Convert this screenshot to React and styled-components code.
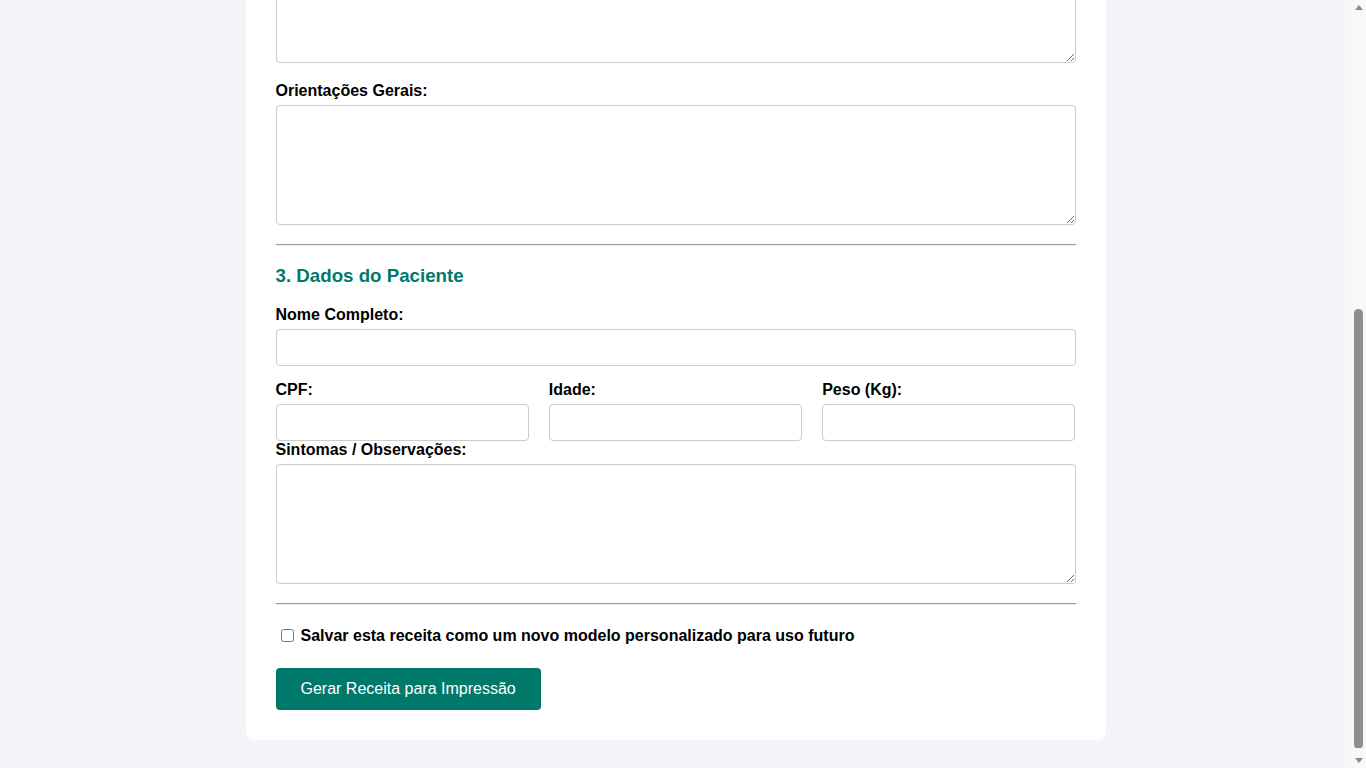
import React, { useLayoutEffect, useRef } from 'react';
import styled, { createGlobalStyle } from 'styled-components';

const GlobalStyle = createGlobalStyle`
  html, body {
    margin: 0;
    height: 100%;
    overflow: hidden;
  }
  body {
    background-color: #f4f4f9;
    font-family: "Liberation Sans", Arial, sans-serif;
    color: #000;
  }
`;

const Viewport = styled.div`
  height: 100vh;
  overflow-y: scroll;
  box-sizing: border-box;
  padding-right: 15px;

  &::-webkit-scrollbar {
    width: 0;
  }
`;

/* drawn page scrollbar, sits over the right edge */
const ScrollRail = styled.div`
  position: fixed;
  top: 0;
  right: 0;
  width: 15px;
  height: 100vh;
  background: #f8f8f8;
  display: flex;
  flex-direction: column;
  align-items: center;
`;

const Arrow = styled.div`
  height: 15px;
  display: flex;
  align-items: center;
  justify-content: center;

  &::before {
    content: '';
    width: 0;
    height: 0;
    border-left: 4.5px solid transparent;
    border-right: 4.5px solid transparent;
    ${props =>
      props.$down
        ? 'border-top: 5px solid #8a8a8a;'
        : 'border-bottom: 5px solid #8a8a8a;'}
  }
`;

const Track = styled.div`
  flex: 1;
  display: flex;
  flex-direction: column;
  justify-content: flex-end;
  padding-bottom: 5px;
`;

const Thumb = styled.div`
  width: 9px;
  height: 439px;
  background: #8f8f8f;
  border-radius: 5px 5px 4px 4px;
`;

const Page = styled.div`
  padding: 8px;
`;

const Container = styled.div`
  max-width: 800px;
  margin: 20px auto;
  padding: 30px;
  background-color: #fff;
  border-radius: 8px;
`;

const Title = styled.h2`
  margin: 0 0 20px;
  text-align: center;
  color: #00796b;
  font-size: 24px;
`;

const SectionTitle = styled.h3`
  color: #00796b;
  font-size: 1.17em;
  margin: 1em 0;
`;

const FormGroup = styled.div`
  margin-bottom: 15px;
`;

const Label = styled.label`
  display: block;
  font-weight: bold;
  font-size: 16px;
  margin-bottom: 5px;
`;

const TextInput = styled.input`
  display: block;
  width: 100%;
  box-sizing: border-box;
  padding: 10px;
  border: 1px solid #ccc;
  border-radius: 4px;
  font-family: inherit;
  font-size: 13.33px;
`;

const Select = styled.select`
  display: block;
  width: 100%;
  box-sizing: border-box;
  padding: 10px;
  height: 37px;
  border: 1px solid #ccc;
  border-radius: 4px;
  background: #fff;
  font-family: inherit;
`;

const TextArea = styled.textarea`
  width: 100%;
  box-sizing: border-box;
  height: 120px;
  padding: 10px;
  border: 1px solid #ccc;
  border-radius: 4px;
  font-family: inherit;
  vertical-align: baseline;
`;

const Row = styled.div`
  display: grid;
  grid-template-columns: repeat(3, 1fr);
  gap: 20px;
`;

const Divider = styled.hr`
  margin: 8px 0;
  border: 0;
  border-top: 1px solid #9a9a9a;
  border-bottom: 1px solid #eee;
`;

const CheckRow = styled.div`
  display: flex;
  align-items: center;
  margin: 22px 0 23px;
`;

const CheckBox = styled.input`
  margin: 0 0 0 5px;
  width: 13px;
  height: 13px;
`;

const CheckLabel = styled.label`
  margin-left: 7px;
  font-weight: bold;
  font-size: 16px;
`;

const Button = styled.button`
  background-color: #00796b;
  color: #fff;
  border: none;
  border-radius: 4px;
  padding: 12px 25px;
  font-family: inherit;
  font-size: 16px;
  cursor: pointer;
`;

export default function App() {
  const viewRef = useRef(null);

  useLayoutEffect(() => {
    const el = viewRef.current;
    if (el) el.scrollTop = el.scrollHeight;
  }, []);

  return (
    <>
      <GlobalStyle />
      <Viewport ref={viewRef}>
        <Page>
          <Container>
            <Title>Gerador de Receitas</Title>

            <SectionTitle>1. Dados do Médico</SectionTitle>
            <FormGroup>
              <Label>Modelo de Receita:</Label>
              <Select defaultValue="">
                <option value="">Selecione um modelo</option>
              </Select>
            </FormGroup>
            <FormGroup>
              <Label>Nome do Médico:</Label>
              <TextInput type="text" />
            </FormGroup>
            <FormGroup>
              <Label>CRM / UF:</Label>
              <TextInput type="text" />
            </FormGroup>

            <Divider />

            <SectionTitle>2. Prescrição</SectionTitle>
            <FormGroup>
              <Label>Medicamentos e Posologia:</Label>
              <TextArea />
            </FormGroup>
            <FormGroup>
              <Label>Orientações Gerais:</Label>
              <TextArea />
            </FormGroup>

            <Divider />

            <SectionTitle>3. Dados do Paciente</SectionTitle>
            <FormGroup>
              <Label>Nome Completo:</Label>
              <TextInput type="text" />
            </FormGroup>
            <Row>
              <div>
                <Label>CPF:</Label>
                <TextInput type="text" />
              </div>
              <div>
                <Label>Idade:</Label>
                <TextInput type="text" />
              </div>
              <div>
                <Label>Peso (Kg):</Label>
                <TextInput type="text" />
              </div>
            </Row>
            <FormGroup>
              <Label>Sintomas / Observações:</Label>
              <TextArea />
            </FormGroup>

            <Divider />

            <CheckRow>
              <CheckBox type="checkbox" id="salvar" />
              <CheckLabel htmlFor="salvar">
                Salvar esta receita como um novo modelo personalizado para uso futuro
              </CheckLabel>
            </CheckRow>

            <Button type="button">Gerar Receita para Impressão</Button>
          </Container>
        </Page>
      </Viewport>
      <ScrollRail aria-hidden="true">
        <Arrow />
        <Track>
          <Thumb />
        </Track>
        <Arrow $down />
      </ScrollRail>
    </>
  );
}
